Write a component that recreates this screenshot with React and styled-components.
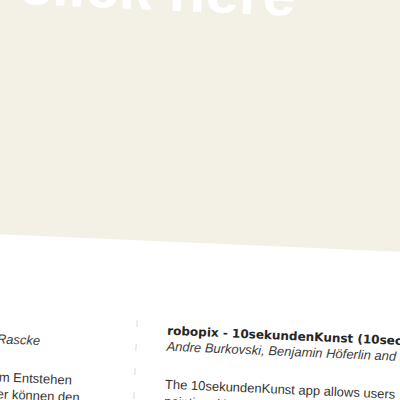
import styled, { createGlobalStyle } from "styled-components";

const GlobalStyle = createGlobalStyle`
  html, body {
    margin: 0;
    padding: 0;
    background: #ffffff;
  }
`;

const Stage = styled.div`
  width: 400px;
  height: 400px;
  overflow: hidden;
  background: #ffffff;
`;

// the whole page is photographed a bit tilted
const Page = styled.div`
  width: 800px;
  margin-left: -260px;
  margin-top: -100px;
  transform-origin: 460px 300px;
  transform: rotate(2.5deg);
  background: #ffffff;
`;

const Hero = styled.div`
  height: 343px;
  box-sizing: border-box;
  padding: 62px 0 0 270px;
  background: #f3f0e6;
`;

const HeroText = styled.div`
  font-family: "Liberation Sans", Arial, sans-serif;
  font-weight: 700;
  font-size: 60px;
  line-height: 60px;
  color: #ffffff;
`;

const Columns = styled.div`
  display: grid;
  grid-template-columns: 236px 1px 300px;
  column-gap: 30px;
  margin-top: 80px;
  padding-left: 136px;
  padding-top: 2px;
  height: 200px;
`;

const Separator = styled.div`
  margin-top: -2px;
  background-image: repeating-linear-gradient(
    to bottom,
    #d9d9d9 0 7px,
    transparent 7px 24px
  );
`;

const Column = styled.div`
  display: flex;
  flex-direction: column;
`;

const Title = styled.div`
  font-family: "DejaVu Sans", Verdana, sans-serif;
  font-weight: 700;
  font-size: 12px;
  line-height: 15px;
  color: #262626;
  white-space: nowrap;
`;

const Authors = styled.div`
  font-family: "Liberation Sans", Arial, sans-serif;
  font-style: italic;
  font-size: 13px;
  line-height: 15px;
  color: #3c3c3c;
  white-space: nowrap;
`;

const Text = styled.p`
  margin: 22px 0 0;
  font-family: "Liberation Sans", Arial, sans-serif;
  font-size: 13px;
  line-height: 17px;
  color: #333333;
  white-space: nowrap;
`;

export default function App() {
  return (
    <Stage>
      <GlobalStyle />
      <Page>
        <Hero>
          <HeroText>click here</HeroText>
        </Hero>
        <Columns>
          <Column>
            <Title>Pinselspuren</Title>
            <Authors>Moritz Hoffmann, Jan Rascke</Authors>
            <Text>
              Die App zeigt Bilder vom Entstehen
              <br />
              Pinselstriche. Betrachter können den
              <br />
              Malprozess Schritt für Schritt verfolgen.
            </Text>
          </Column>
          <Separator />
          <Column>
            <Title>robopix - 10sekundenKunst (10secArt)</Title>
            <Authors>Andre Burkovski, Benjamin Höferlin and Daniel Weiskopf</Authors>
            <Text>
              The 10sekundenKunst app allows users
              <br />
              painting. Up to four strokes per second are
              <br />
              recorded and replayed as a short film.
            </Text>
          </Column>
        </Columns>
      </Page>
    </Stage>
  );
}
